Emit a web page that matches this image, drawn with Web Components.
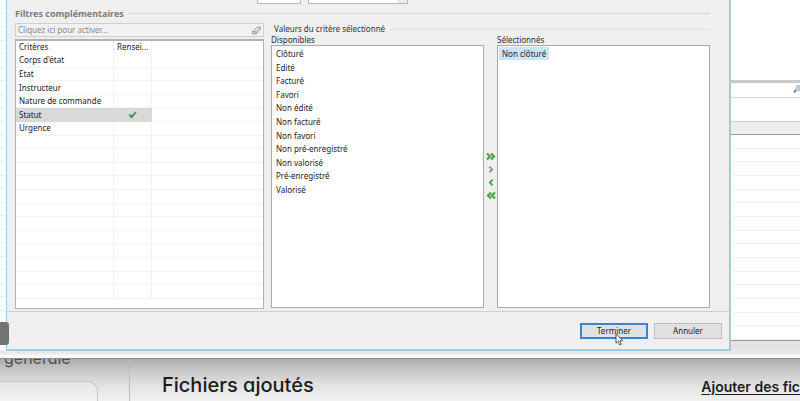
<!DOCTYPE html>
<html lang="fr">
<head>
<meta charset="utf-8">
<title>Filtres complémentaires</title>
<style>
  html, body { margin: 0; height: 100%; overflow: hidden; }
  body { font: 8px/14px "Noto Sans", "Open Sans", sans-serif; color: #222; background: #f1f1f1; }
</style>
</head>
<body>
<desktop-view></desktop-view>

<script>
const define = (name, html, setup) => {
  const tpl = document.createElement('template');
  tpl.innerHTML = html;
  customElements.define(name, class extends HTMLElement {
    connectedCallback() {
      if (this.shadowRoot) return;
      this.attachShadow({ mode: 'open' }).append(tpl.content.cloneNode(true));
      if (setup) setup(this, this.shadowRoot);
    }
  });
};

/* Boxed list of options; each item is a button */
define('option-list', `
<style>
  :host { display: flex; flex-direction: column; min-width: 0; }
  h3 { margin: 0; font: inherit; line-height: 10px; color: #2d2d2d; }
  .frame { flex: 1; border: 1px solid #a9a9a9; background: #fff; padding: 1px; }
  ul { list-style: none; margin: 0; padding: 0; display: grid; grid-auto-rows: 1fr; align-content: start; height: var(--items-height, auto); }
  li { display: flex; }
  button { all: unset; font: inherit; line-height: 13px; padding: 0 3px; color: #222; }
  button[aria-pressed=true] { background: #cce4f7; color: #14283c; }
</style>
<h3></h3>
<div class="frame"><ul></ul></div>`, (host, root) => {
  root.querySelector('h3').textContent = host.getAttribute('label');
  const ul = root.querySelector('ul');
  ul.setAttribute('aria-label', host.getAttribute('label'));
  for (const text of host.getAttribute('items').split('|')) {
    const li = document.createElement('li');
    const b = document.createElement('button');
    b.type = 'button';
    b.textContent = text;
    b.setAttribute('aria-pressed', String(host.getAttribute('selected') === text));
    li.append(b);
    ul.append(li);
  }
});

/* Section caption with a rule beside it */
define('group-caption', `
<style>
  :host { display: flex; align-items: center; gap: 4px; }
  :host::after { content: ""; flex: 1; height: 1px; background: var(--rule, #d6d6d6); }
</style>
<slot></slot>`);

define('criteria-table', `
<style>
  :host { display: block; box-sizing: border-box; border: 1px solid #b2b2b2; border-top-width: 2px; background: #fff; padding-bottom: 9px; }
  table { width: 100%; height: 258px; border-collapse: separate; border-spacing: 0; table-layout: fixed; }
  th, td { height: 12px; padding: 0 0 0 3px; font-weight: 400; text-align: left; line-height: 12px; white-space: nowrap;
           border-right: 1px solid #f1f1f1; border-bottom: 1px solid #f3f3f3; }
  th:last-child, td:last-child { border-right: 0; }
  td:nth-child(2) { padding: 0; text-align: center; line-height: 0; }
  th { border-bottom-color: #fff; }
  tr.on td:nth-child(-n+2) { background: #d9d9d9; border-color: #d9d9d9; }
  .a { width: 98px; } .b { width: 38px; }
</style>
<table>
  <colgroup><col class="a"><col class="b"><col></colgroup>
  <thead><tr><th>Critères</th><th>Rensei...</th><th></th></tr></thead>
  <tbody></tbody>
</table>`, (host, root) => {
  const names = ["Corps d'état", 'Etat', 'Instructeur', 'Nature de commande', 'Statut', 'Urgence'];
  const check = '<svg width="9" height="8" viewBox="0 0 9 8" role="img" aria-label="Renseigné"><path d="M0.6 4 2.2 2.9 3.7 4.4 7.4 0.6 8.6 1.2 4 7.2 3.2 7.2Z" fill="#3a9850"/></svg>';
  const body = root.querySelector('tbody');
  for (let i = 0; i < 18; i++) {
    const tr = document.createElement('tr');
    const on = names[i] === 'Statut';
    if (on) tr.className = 'on';
    tr.innerHTML = `<td>${names[i] || ''}</td><td>${on ? check : ''}</td><td></td>`;
    body.append(tr);
  }
});

define('search-field', `
<style>
  :host { display: flex; align-items: center; box-sizing: border-box; height: 14px; padding: 0 2px; border: 1px solid #cfcfcf; background: #f1f1f1; }
  input { all: unset; flex: 1; min-width: 0; font: inherit; line-height: 12px; }
  input::placeholder { color: #8a8a8a; opacity: 1; }
  button { all: unset; display: flex; }
</style>
<input type="text" aria-label="Filtrer les critères" placeholder="Cliquez ici pour activer...">
<button type="button" aria-label="Effacer">
  <svg width="9" height="9" viewBox="0 0 9 9" fill="#f3f3f3" stroke="#777" stroke-width=".7" stroke-linejoin="round">
    <path d="M.6 5.8 5 1.2H8.3L4 5.8ZM.6 5.8V7.9H4V5.8M4 7.9 8.3 3.4V1.2"/>
  </svg>
</button>`);

/* Buttons that move values between the two lists */
define('transfer-bar', `
<style>
  :host { display: flex; flex-direction: column; justify-content: center; align-items: center; gap: 4px; padding-top: 8px; }
  button { all: unset; display: flex; }
</style>
<button type="button" aria-label="Tout ajouter"><svg width="10" height="9" viewBox="0 0 10 9" fill="none" stroke="#46a546" stroke-width="2.2"><path d="M1 1.4 4 4.5 1 7.6M5 1.4 8 4.5 5 7.6"/></svg></button>
<button type="button" aria-label="Ajouter"><svg width="10" height="9" viewBox="0 0 10 9" fill="none" stroke="#8e8e8e" stroke-width="1.8"><path d="M3.4 1.6 6.2 4.5 3.4 7.4"/></svg></button>
<button type="button" aria-label="Retirer"><svg width="10" height="9" viewBox="0 0 10 9" fill="none" stroke="#46a546" stroke-width="1.8"><path d="M6.6 1.6 3.8 4.5 6.6 7.4"/></svg></button>
<button type="button" aria-label="Tout retirer"><svg width="10" height="9" viewBox="0 0 10 9" fill="none" stroke="#46a546" stroke-width="2.2"><path d="M5 1.4 2 4.5 5 7.6M9 1.4 6 4.5 9 7.6"/></svg></button>`);

define('push-button', `
<style>
  :host { display: block; width: 68px; }
  button { box-sizing: border-box; width: 100%; height: 16px; padding: 0; border: 1px solid #bdbdbd; background: #e1e1e1; font: inherit; line-height: 12px; color: #222; }
  :host([primary]) button { border: 2px solid #3b82d0; }
</style>
<button type="button"><slot></slot></button>`);

define('filter-dialog', `
<style>
  :host { display: flex; flex-direction: column; position: relative; background: #efefef; border: solid #a3cbdc; border-width: 0 2px 2px 1px; min-width: 0; }
  .content { padding: 0 19px 2px 8px; }
  .inputs { display: flex; gap: 7px; padding-left: 242px; height: 4px; }
  .inputs div { box-sizing: border-box; border: 1px solid #b5b5b5; border-top: 0; background: #fff; }
  .inputs .s { width: 44px; }
  .inputs .l { width: 100px; display: flex; justify-content: flex-end; }
  .inputs .l::after { content: ""; width: 8px; background: #eee; border-left: 1px solid #ddd; }
  group-caption.title { font-size: 9px; font-weight: 700; color: #7b7b7b; height: 19px; line-height: 19px; }
  .cols { display: grid; grid-template-columns: 249px 1fr; gap: 7px; }
  .left { display: flex; flex-direction: column; gap: 2px; }
  .right { display: grid; grid-template-rows: 12px 1fr; padding-bottom: 1px; }
  .right group-caption { padding-left: 3px; --rule: #e4e4e4; color: #333; }
  .lists { display: grid; grid-template-columns: 1fr 13px 1fr; }
  option-list.all { --items-height: 149px; }
  footer { display: flex; justify-content: flex-end; gap: 6px; padding: 11px 7px 10px; border-top: 1px solid #cfcfcf; }
  .pointer { position: absolute; right: 105px; bottom: 3px; }
</style>
<div class="content">
  <div class="inputs"><div class="s"></div><div class="l"></div></div>
  <group-caption class="title">Filtres complémentaires</group-caption>
  <div class="cols">
    <div class="left">
      <search-field></search-field>
      <criteria-table></criteria-table>
    </div>
    <div class="right">
      <group-caption>Valeurs du critère sélectionné</group-caption>
      <div class="lists">
        <option-list class="all" label="Disponibles" items="Clôturé|Edité|Facturé|Favori|Non édité|Non facturé|Non favori|Non pré-enregistré|Non valorisé|Pré-enregistré|Valorisé"></option-list>
        <transfer-bar></transfer-bar>
        <option-list label="Sélectionnés" items="Non clôturé" selected="Non clôturé"></option-list>
      </div>
    </div>
  </div>
</div>
<footer>
  <push-button primary>Terminer</push-button>
  <push-button>Annuler</push-button>
</footer>
<svg class="pointer" width="9" height="13" viewBox="0 0 9 13"><path d="M1 .8V10.2L3.2 8.2 4.7 11.9 6.3 11.2 4.8 7.7H7.8Z" fill="#fff" stroke="#333" stroke-width=".8"/></svg>`);

/* Visible right part of the window that lies behind the dialog */
define('back-panel', `
<style>
  :host { display: grid; grid-template-rows: 80px 18px 23px 14px 1fr 11px; background: #fff; }
  .search { border-top: 3px solid #cacaca; border-bottom: 1px solid #d5d5d5; display: flex; justify-content: flex-end; align-items: flex-start; box-sizing: border-box; }
  .search button { all: unset; display: flex; padding-top: 1px; }
  .head { box-sizing: border-box; background: #eee; border-top: 1px solid #d0d0d0; border-bottom: 1px solid #9b9b9b; }
  .rows { display: grid; grid-auto-rows: 1fr; padding-left: 3px; }
  .rows i { border-bottom: 1px solid #f0f0f0; }
  .bar { background: #e3e3e3; border-top: 1px solid #9a9a9a; }
</style>
<div></div>
<div class="search"><button type="button" aria-label="Rechercher"><svg width="7" height="10" viewBox="0 0 7 10"><path d="M3.2 5.6 1 8.4" stroke="#666" stroke-width="1.6"/><path d="M2.6 5.4 3.6 1.4 7 1.2V6.4L3.4 6.6Z" fill="#bcd3e6" stroke="#9aafc2" stroke-width=".6"/></svg></button></div>
<div></div>
<div class="head"></div>
<div class="rows"></div>
<div class="bar"></div>`, (host, root) => {
  root.querySelector('.rows').innerHTML = '<i></i>'.repeat(15);
});

/* Visible left edge of the same window, with the end of a tooltip over it */
define('left-edge', `
<style>
  :host { display: grid; grid-auto-rows: 1fr; background: #fdfdfd; position: relative; }
  i { border-bottom: 1px solid #ededed; }
  span { position: absolute; left: 0; bottom: 6px; width: 9px; height: 23px; border-radius: 0 3px 3px 0; background: #717673; z-index: 1; }
</style>
<span></span>`, (host, root) => {
  root.innerHTML += '<i></i>'.repeat(26);
});

define('web-page', `
<style>
  :host { display: grid; grid-template-columns: 130px 1fr; font-family: Inter, "Noto Sans", sans-serif; font-feature-settings: "cv11"; color: #1c1c1c;
          background: linear-gradient(#adadad, #c9c9c9 12px, #e4e4e4 28px, #f1f1f1 42px); }
  aside { border-right: 1px solid #bdbdbd; }
  p { margin: -10px 0 0; padding-left: 4px; font-size: 16px; line-height: 18px; color: #4e4e4e; }
  .box { margin: 14px 31px 0 0; height: 40px; box-sizing: border-box; border: 1px solid #c4c4c4; border-left: 0; border-radius: 0 10px 0 0; background: #ffffff30; }
  main { display: flex; justify-content: space-between; align-items: baseline; padding: 16px 0 0 32px; white-space: nowrap; }
  h2 { margin: 0; font-size: 20px; line-height: 20px; font-weight: 500; }
  a { font-size: 14px; line-height: 20px; font-weight: 600; color: inherit; text-underline-offset: 2px; }
</style>
<aside><p>générale</p><div class="box"></div></aside>
<main><h2>Fichiers ajoutés</h2><a href="#ajouter">Ajouter des fic</a></main>`);

define('desktop-view', `
<style>
  :host { display: flex; flex-direction: column; height: 100vh; overflow: hidden; }
  .window { flex: none; position: relative; z-index: 1; border-bottom: 1px solid #8d8d8d; }
  .panes { display: grid; grid-template-columns: 6px 1fr 69px; }
  .edge { height: 7px; background: linear-gradient(#e9e9e9, #e9e9e9 3px, #fafafa 4px); }
  web-page { flex: 1 0 auto; }
</style>
<div class="window">
  <div class="panes">
    <left-edge></left-edge>
    <filter-dialog></filter-dialog>
    <back-panel></back-panel>
  </div>
  <div class="edge"></div>
</div>
<web-page></web-page>`);
</script>
</body>
</html>
